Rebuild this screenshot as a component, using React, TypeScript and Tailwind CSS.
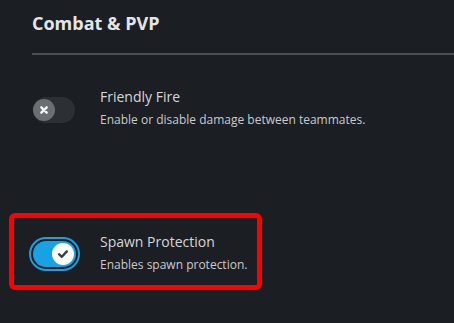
import React from 'react';

function Toggle({ on }: { on: boolean }) {
  if (on) {
    return (
      <div className="relative flex h-[26px] w-[43px] shrink-0 items-center justify-end rounded-full bg-[#17a2e4] px-[2px] ring-2 ring-[#17a2e4] ring-offset-2 ring-offset-[#1b1e22]">
        <div className="flex h-[22px] w-[22px] items-center justify-center rounded-full bg-white">
          <svg width="12" height="12" viewBox="0 0 12 12" fill="none">
            <path d="M2.2 6.3 L4.9 8.8 L9.8 3.4" stroke="#3b3e43" strokeWidth="2.4" strokeLinecap="round" strokeLinejoin="round" />
          </svg>
        </div>
      </div>
    );
  }
  return (
    <div className="flex h-[26px] w-[42px] shrink-0 items-center rounded-full bg-[#2c2f33]">
      <div className="flex h-[22px] w-[22px] items-center justify-center rounded-full bg-[#6b6e72]">
        <svg width="10" height="10" viewBox="0 0 10 10" fill="none">
          <path d="M2.3 2.3 L7.7 7.7 M7.7 2.3 L2.3 7.7" stroke="#f2f2f2" strokeWidth="2.4" strokeLinecap="round" />
        </svg>
      </div>
    </div>
  );
}

function Setting({ on, title, desc }: { on: boolean; title: string; desc: string }) {
  return (
    <div className="flex items-start">
      <div className={on ? 'mt-[9px]' : 'mt-[10px]'}>
        <Toggle on={on} />
      </div>
      <div className={on ? 'ml-[24px]' : 'ml-[25px]'}>
        <div className="text-[14px] leading-[20px] text-[#d5d7da]">{title}</div>
        <div className="mt-[5px] text-[12px] leading-[16px] text-[#c9cbce]">{desc}</div>
      </div>
    </div>
  );
}

export default function App() {
  return (
    <main className="min-h-screen bg-[#1b1e22] pl-8 pt-[11px] font-['Open_Sans',sans-serif]">
      <h2 className="text-[18px] font-bold leading-[24px] text-[#e3e5e8]">Combat &amp; PVP</h2>
      <div className="mt-[18px] h-[2px] bg-[#4b4e52]" />

      <div className="ml-px mt-[32px]">
        <Setting on={false} title="Friendly Fire" desc="Enable or disable damage between teammates." />
      </div>

      {/* highlighted row */}
      <div className="-ml-[23px] mt-[85px] w-[253px] rounded-[6px] border-[5px] border-[#ff0000] pb-[12px] pl-[19px] pt-[14px]">
        <Setting on={true} title="Spawn Protection" desc="Enables spawn protection." />
      </div>
    </main>
  );
}
